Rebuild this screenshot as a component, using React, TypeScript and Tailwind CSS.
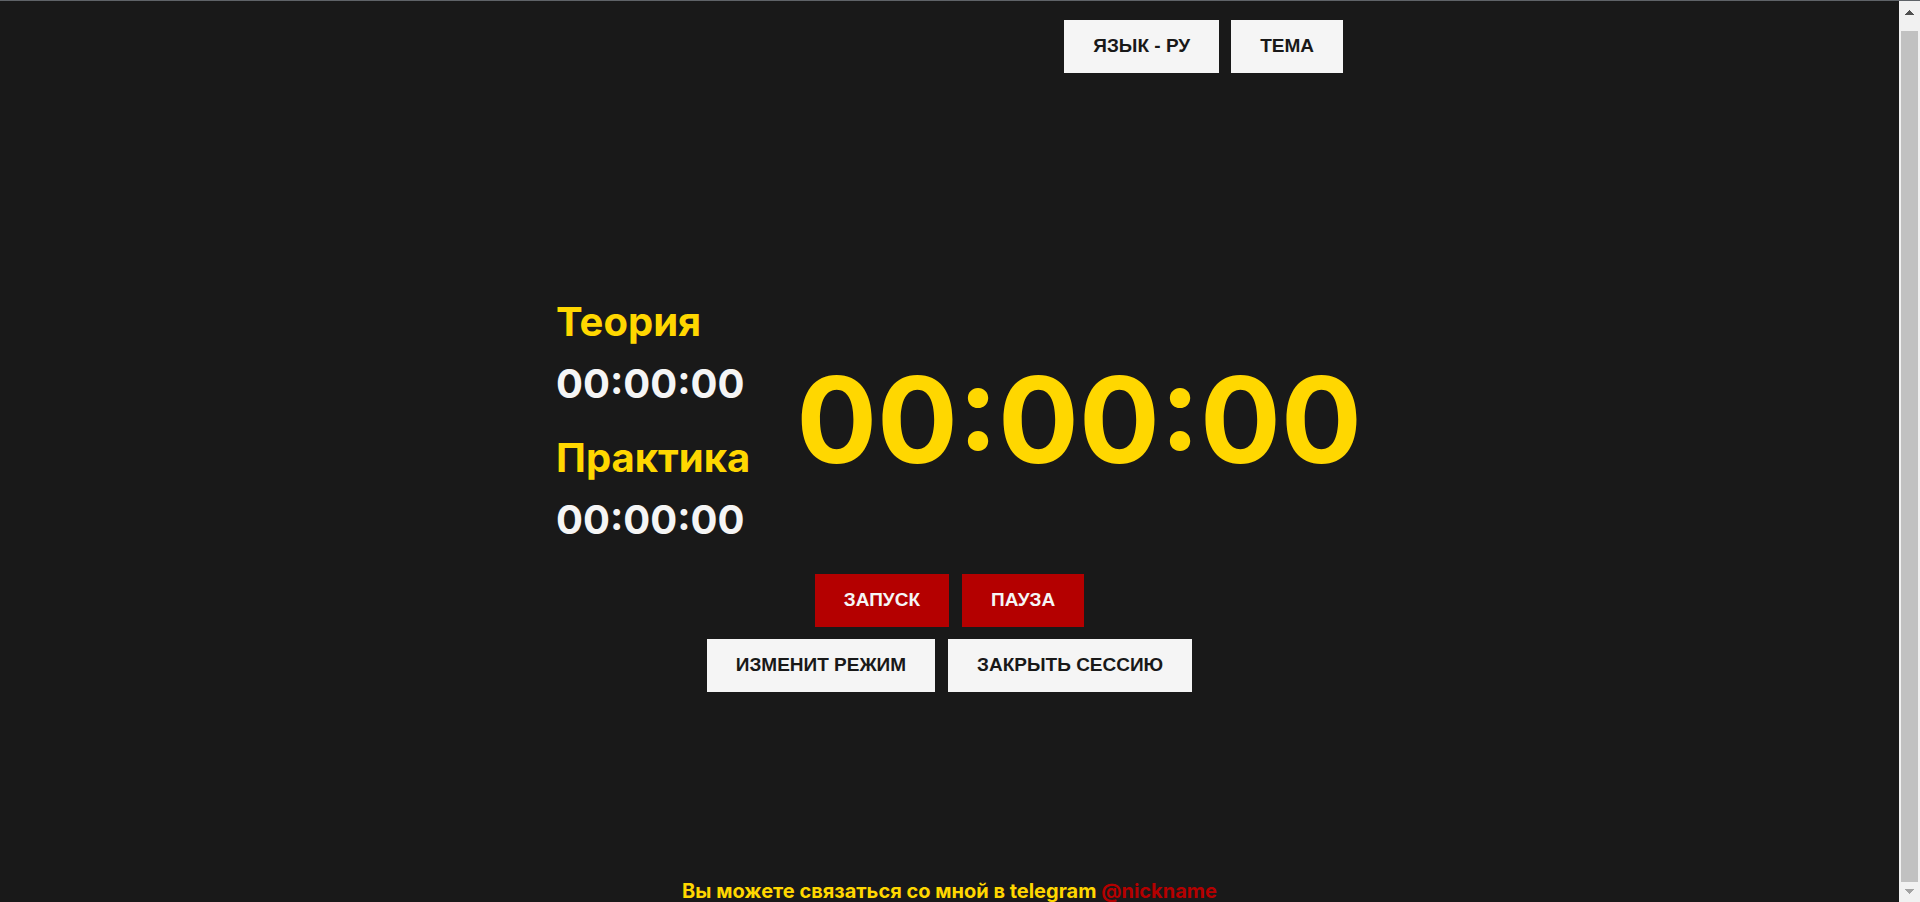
import React from "react";

const buttonBase =
  "shrink-0 cursor-pointer whitespace-nowrap px-[29px] pt-[15px] pb-[17px] font-['Liberation_Sans',Arial,sans-serif] text-[19px] font-bold uppercase leading-[21px]";

type ActionButtonProps = {
  children: React.ReactNode;
  tone?: "light" | "red";
};

function ActionButton({ children, tone = "light" }: ActionButtonProps) {
  const colors = tone === "red" ? "bg-[#b40000] text-[#f5f5f5]" : "bg-[#f5f5f5] text-[#191919]";
  return (
    <button type="button" className={`${buttonBase} ${colors}`}>
      {children}
    </button>
  );
}

function Counter({ title, time }: { title: string; time: string }) {
  return (
    <section className="flex flex-col gap-[14px]">
      <h2 className="text-[#ffd700]">{title}</h2>
      <p className="text-[#f5f5f5]">{time}</p>
    </section>
  );
}

function ScrollTrack() {
  return (
    <div aria-hidden="true" className="flex w-[21px] shrink-0 flex-col bg-[#f1f1f1] pl-[2px] pr-[2px]">
      <div className="flex h-[30px] shrink-0 items-start justify-center pt-[9px]">
        <svg width="9" height="5" viewBox="0 0 9 5" shapeRendering="crispEdges">
          <path d="M4 0h1v1h1v1h1v1h1v1h1v1H0V4h1V3h1V2h1V1h1z" fill="#505050" />
        </svg>
      </div>
      <div className="grow bg-[#c1c1c1]" />
      <div className="flex h-5 shrink-0 items-start justify-center pt-[7px]">
        <svg width="9" height="5" viewBox="0 0 9 5" shapeRendering="crispEdges">
          <path d="M0 0h9v1H8v1H7v1H6v1H5v1H4V4H3V3H2V2H1V1H0z" fill="#a3a3a3" />
        </svg>
      </div>
    </div>
  );
}

export default function App() {
  return (
    <div className="flex h-screen overflow-hidden border-t border-[#5f6368] bg-[#191919] font-['Inter',sans-serif] font-bold">
      <div className="flex min-w-0 grow flex-col items-center">
        <header className="flex w-full max-w-[787px] shrink-0 justify-end gap-3 pt-[19px]">
          <ActionButton>Язык - РУ</ActionButton>
          <ActionButton>Тема</ActionButton>
        </header>

        <main className="flex w-full max-w-[787px] grow flex-col items-center justify-center pt-[37px]">
          <div className="flex w-full items-center gap-[46px]">
            <div className="flex flex-col gap-[26px] text-[40px] leading-[48px]">
              <Counter title="Теория" time="00:00:00" />
              <Counter title="Практика" time="00:00:00" />
            </div>
            <h1 className="whitespace-nowrap pb-1 text-[120px] leading-[145px] text-[#ffd700]">00:00:00</h1>
          </div>
          <div className="mt-[30px] flex flex-col items-center gap-3">
            <div className="flex gap-[13px]">
              <ActionButton tone="red">Запуск</ActionButton>
              <ActionButton tone="red">Пауза</ActionButton>
            </div>
            <div className="flex gap-[13px]">
              <ActionButton>Изменит режим</ActionButton>
              <ActionButton>Закрыть сессию</ActionButton>
            </div>
          </div>
        </main>

        <footer className="shrink-0 whitespace-nowrap text-xl leading-[22px] text-[#ffd700]">
          Вы можете связаться со мной в telegram{" "}
          <a href="#nickname" className="text-[#b40000]">
            @nickname
          </a>
        </footer>
      </div>
      <ScrollTrack />
    </div>
  );
}
